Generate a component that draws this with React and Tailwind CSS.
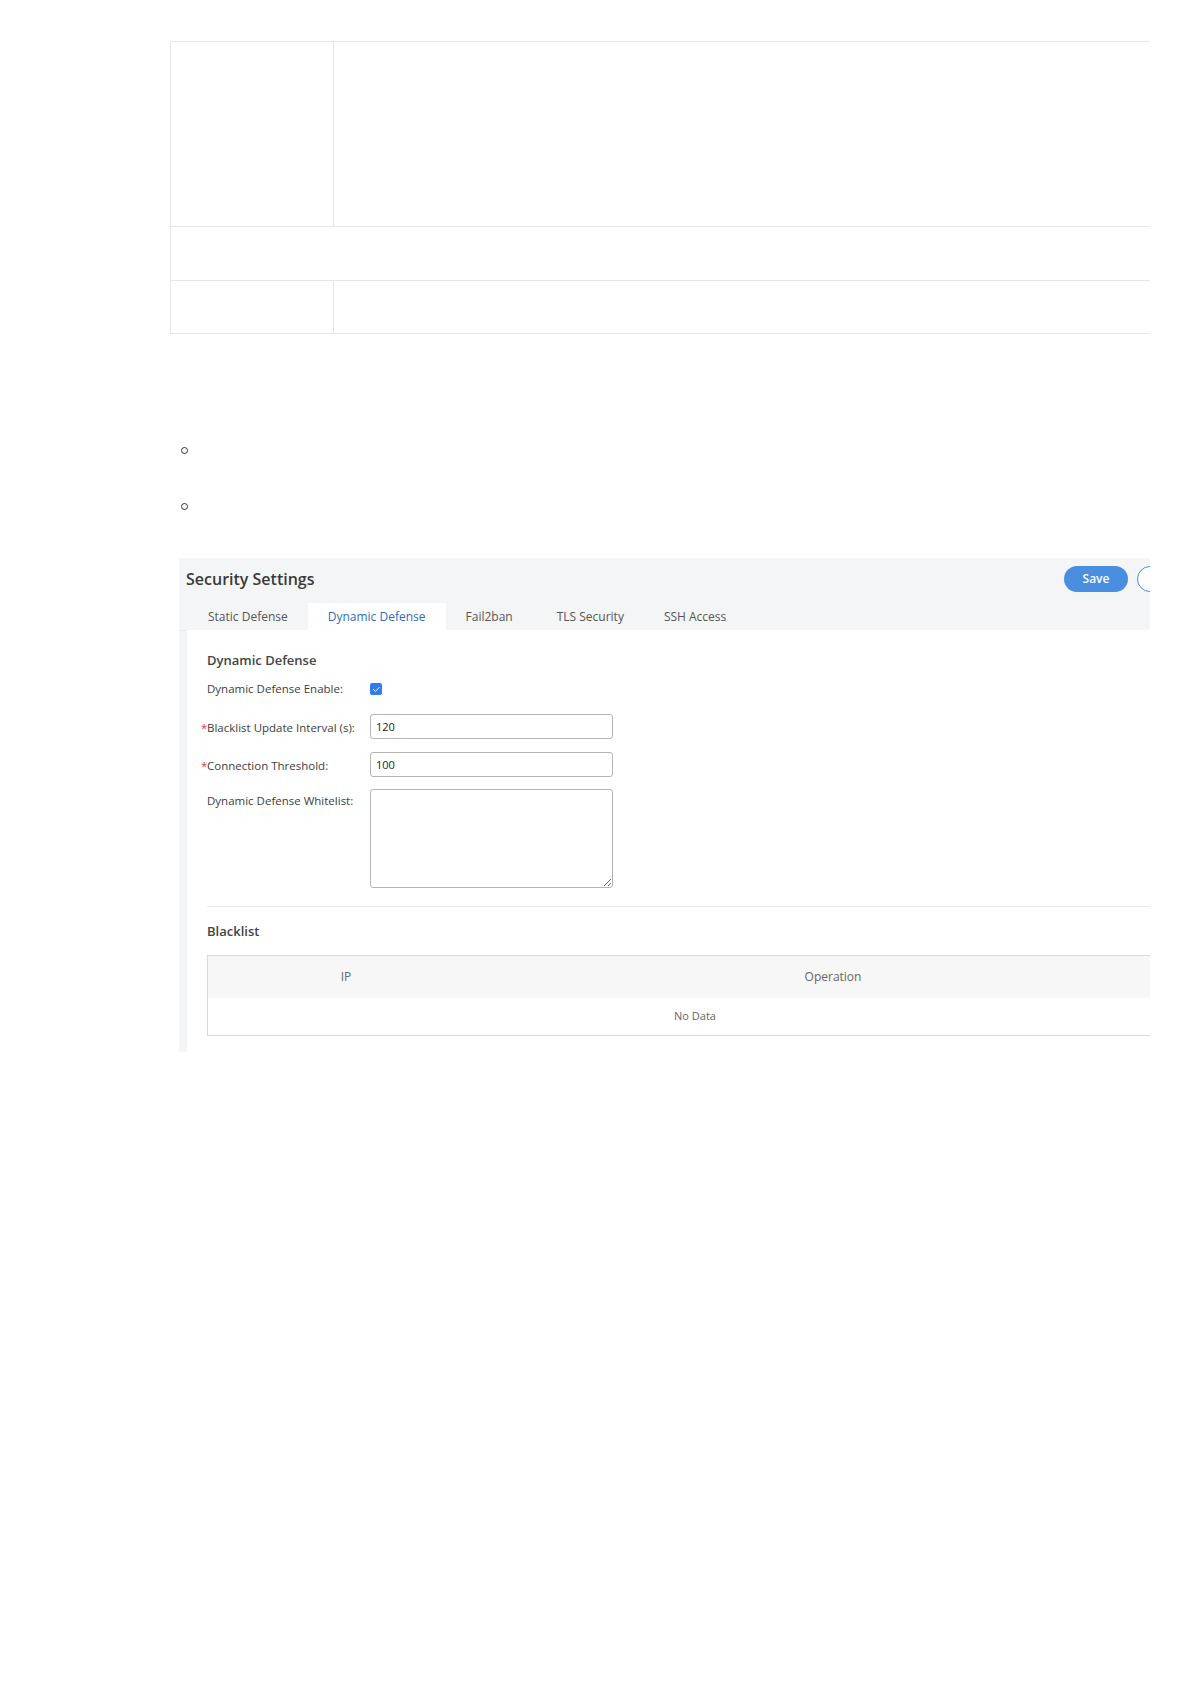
import { Check } from 'lucide-react';

const TABS = ['Static Defense', 'Dynamic Defense', 'Fail2ban', 'TLS Security', 'SSH Access'];

function FieldRow({ label, required, className, children }) {
  return (
    <div className={`flex ${className || ''}`}>
      <div className="relative w-[163px] shrink-0 pt-[2px] text-[11.5px] leading-[20px] text-[#3d3d3d]">
        {required && <span className="absolute -left-[6px] top-[2px] text-[#e53935]">*</span>}
        {label}
      </div>
      {children}
    </div>
  );
}

function App() {
  return (
    <div className="min-h-[1684px] w-[1190px] bg-white font-['Open_Sans',sans-serif]">
      <div className="ml-[170px] w-[980px] overflow-hidden pt-[41px]">
        {/* empty table from the page above */}
        <div className="border-t border-l border-[#e6e6e6]">
          <div className="flex h-[185px] border-b border-[#e6e6e6]">
            <div className="w-[163px] border-r border-[#e6e6e6]" />
            <div className="flex-1" />
          </div>
          <div className="h-[54px] border-b border-[#e6e6e6]" />
          <div className="flex h-[53px] border-b border-[#e6e6e6]">
            <div className="w-[163px] border-r border-[#e6e6e6]" />
            <div className="flex-1" />
          </div>
        </div>

        <ul className="ml-[11px] mt-[113px]">
          <li className="flex h-[7px] items-center">
            <span className="h-[7px] w-[7px] rounded-full border border-[#333]" />
          </li>
          <li className="mt-[49px] flex h-[7px] items-center">
            <span className="h-[7px] w-[7px] rounded-full border border-[#333]" />
          </li>
        </ul>

        {/* screenshot of the security settings page */}
        <div className="ml-[9px] mt-[48px] h-[494px] w-[971px] overflow-hidden bg-[#f4f5f7]">
          <div className="flex h-[45px] items-start justify-between pl-[7px]">
            <h1 className="pt-[10px] text-[16px] font-semibold leading-[22px] text-[#3a3a3a]">Security Settings</h1>
            <div className="flex w-[86px] shrink-0 items-center gap-[9px] pt-[8px]">
              <button className="h-[26px] w-[64px] shrink-0 rounded-full bg-[#4a8ee0] text-[12px] font-semibold text-white">
                Save
              </button>
              <span className="h-[26px] w-[40px] shrink-0 rounded-full border border-[#4a8ee0] bg-white" />
            </div>
          </div>

          <div className="flex h-[27px] pl-[9px] shadow-[0_1px_0_#e9eaec]">
            {TABS.map((tab) => (
              <div
                key={tab}
                className={
                  tab === 'Dynamic Defense'
                    ? 'flex items-center bg-white px-[20px] text-[12px] text-[#2f6cb9]'
                    : tab === 'TLS Security'
                      ? 'ml-[4px] flex items-center px-[20px] text-[12px] text-[#555]'
                      : 'flex items-center px-[20px] text-[12px] text-[#555]'
                }
              >
                {tab}
              </div>
            ))}
          </div>

          <div className="ml-[8px] h-[422px] bg-white pl-[20px] pt-[21px]">
            <h2 className="text-[13px] font-semibold leading-[18px] text-[#444]">Dynamic Defense</h2>

            <FieldRow label="Dynamic Defense Enable:" className="mt-[8px] items-center">
              <span className="pt-[2px]">
                <span className="flex h-[12px] w-[12px] items-center justify-center rounded-[2px] bg-[#2f7bf0]">
                  <Check size={9} strokeWidth={2.5} className="text-white" />
                </span>
              </span>
            </FieldRow>

            <FieldRow label="Blacklist Update Interval (s):" required className="mt-[15px] items-center">
              <input
                readOnly
                value="120"
                className="h-[25px] w-[243px] rounded-[3px] border border-[#b5b5b5] px-[5px] text-[11px] text-[#222] outline-none"
              />
            </FieldRow>

            <FieldRow label="Connection Threshold:" required className="mt-[13px] items-center">
              <input
                readOnly
                value="100"
                className="h-[25px] w-[243px] rounded-[3px] border border-[#b5b5b5] px-[5px] text-[11px] text-[#222] outline-none"
              />
            </FieldRow>

            <FieldRow label="Dynamic Defense Whitelist:" className="mt-[12px] items-start">
              <textarea
                readOnly
                className="h-[99px] w-[243px] rounded-[3px] border border-[#b5b5b5] text-[11px] outline-none"
              />
            </FieldRow>

            <div className="mt-[18px] border-t border-[#ebebeb]" />

            <h2 className="mt-[15px] text-[13px] font-semibold leading-[18px] text-[#444]">Blacklist</h2>

            <div className="mt-[15px] w-[976px] border border-[#d9d9d9] text-[12px]">
              <div className="flex h-[42px] items-center bg-[#f7f7f8] text-[#666]">
                <div className="w-[276px] text-center">IP</div>
                <div className="flex-1 text-center">Operation</div>
              </div>
              <div className="flex h-[37px] items-center justify-center text-[11px] text-[#666]">No Data</div>
            </div>
          </div>
        </div>
      </div>
    </div>
  );
}

export default App;
